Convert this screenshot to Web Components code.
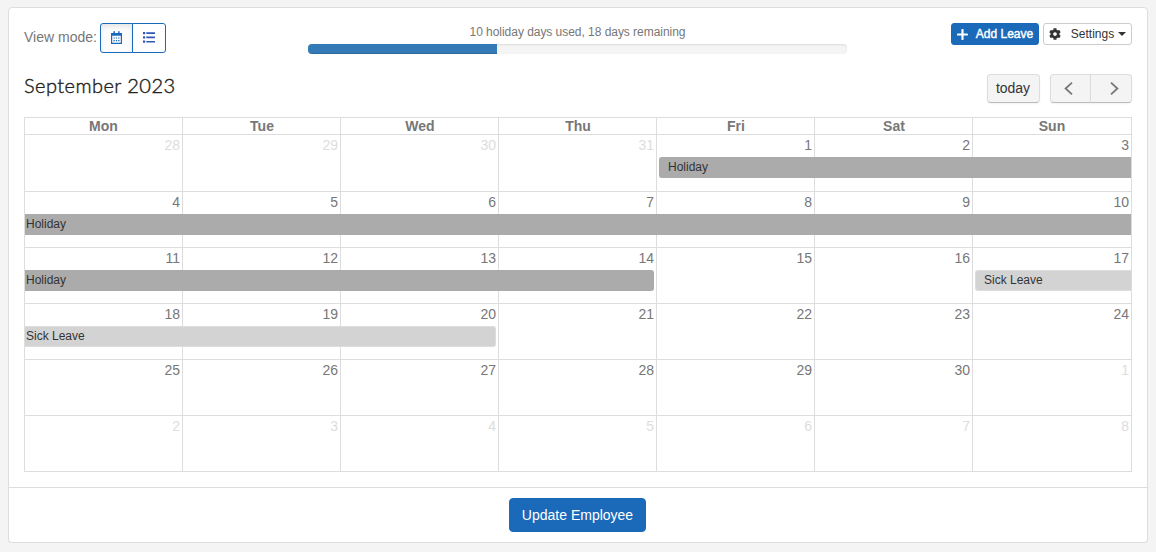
<!DOCTYPE html>
<html lang="en">
<head>
<meta charset="utf-8">
<title>Employee Leave</title>
<style>
    body {
        margin: 0;
        padding: 7px 8px 0;
        background-color: #f4f4f4;
        font-family: "Liberation Sans", Arial, sans-serif;
        font-size: 14px;
        line-height: 20px;
        color: #777;
    }
    .update {
        width: 137px;
        margin-right: 1px;
    }
</style>
</head>
<body>
<leave-panel>
    <leave-toolbar></leave-toolbar>
    <leave-calendar></leave-calendar>
    <app-button class="update" slot="footer" kind="primary">Update Employee</app-button>
</leave-panel>

<script>
const ICONS = {
    calendar: `<svg width="11" height="13" viewBox="0 0 11 13"><path fill="none" stroke="currentColor" stroke-width="1.2" d="M.6 2.7h9.8v9.600H.6z"/><path fill="currentColor" d="M0 2h11v2.800H0zM2.400.2h1.500V3H2.400zM7.100.2h1.500V3H7.100zM2.500 6.400h1.300v1.200H2.500zM4.850 6.400h1.300v1.200h-1.300zM7.200 6.400h1.300v1.200H7.200zM2.500 9h1.300v1.200H2.500zM4.850 9h1.300v1.200h-1.300zM7.200 9h1.300v1.200H7.200z"/></svg>`,
    list: `<svg width="12" height="11" viewBox="0 0 12 11"><path fill="currentColor" d="M0 0h2.200v2.200H0zM3.300.3H12v1.600H3.300zM0 4.300h2.200v2.200H0zM3.300 4.600H12v1.600H3.300zM0 8.600h2.200v2.200H0zM3.300 8.900H12v1.600H3.300z"/></svg>`,
    plus: `<svg width="11" height="11" viewBox="0 0 11 11"><path stroke="currentColor" stroke-width="2.2" stroke-linecap="round" d="M5.5 1v9M1 5.5h9"/></svg>`,
    cog: `<svg width="12" height="12" viewBox="0 0 512 512"><path fill="currentColor" d="M487.4 315.700l-42.600-24.600c4.300-23.200 4.300-47 0-70.200l42.600-24.600c4.900-2.800 7.100-8.600 5.500-14-11.100-35.600-30-67.800-54.700-94.600-3.800-4.100-10-5.100-14.800-2.300L380.800 110c-17.900-15.400-38.500-27.300-60.800-35.100V25.800c0-5.600-3.900-10.500-9.400-11.700-36.700-8.200-74.300-7.800-109.200 0-5.500 1.200-9.400 6.100-9.400 11.700V75c-22.200 7.900-42.800 19.800-60.800 35.100L88.700 85.500c-4.900-2.800-11-1.900-14.800 2.300-24.700 26.700-43.600 58.900-54.700 94.600-1.700 5.400.6 11.200 5.500 14L67.300 221c-4.300 23.200-4.300 47 0 70.200l-42.600 24.600c-4.900 2.800-7.100 8.600-5.500 14 11.100 35.600 30 67.800 54.700 94.600 3.800 4.100 10 5.100 14.800 2.300l42.600-24.600c17.900 15.400 38.500 27.300 60.800 35.100v49.200c0 5.600 3.900 10.500 9.400 11.700 36.700 8.200 74.300 7.800 109.200 0 5.500-1.200 9.400-6.100 9.400-11.700v-49.200c22.200-7.900 42.800-19.800 60.800-35.100l42.600 24.600c4.900 2.800 11 1.900 14.800-2.300 24.700-26.700 43.600-58.900 54.700-94.600 1.500-5.500-.7-11.300-5.600-14.100zM256 336c-44.100 0-80-35.900-80-80s35.900-80 80-80 80 35.900 80 80-35.900 80-80 80z"/></svg>`,
    caret: `<svg width="8" height="4" viewBox="0 0 8 4"><path fill="currentColor" d="M0 0h8L4 4z"/></svg>`,
    left: `<svg width="9" height="13" viewBox="0 0 9 13"><path fill="none" stroke="currentColor" stroke-width="1.8" d="M8 .7 1.600 6.500 8 12.300"/></svg>`,
    right: `<svg width="9" height="13" viewBox="0 0 9 13"><path fill="none" stroke="currentColor" stroke-width="1.8" d="M1 .7 7.400 6.500 1 12.300"/></svg>`
};

class AppIcon extends HTMLElement {
    constructor() {
        super();
        this.attachShadow({mode: 'open'});
    }

    connectedCallback() {
        this.shadowRoot.innerHTML = `
        <style>
            :host {
                display: inline-flex;
            }
        </style>
        ${ICONS[this.getAttribute('name')]}`;
    }
}
customElements.define('app-icon', AppIcon);

class AppButton extends HTMLElement {
    constructor() {
        super();
        this.attachShadow({mode: 'open'});
    }

    connectedCallback() {
        this.shadowRoot.innerHTML = `
        <style>
            :host {
                display: inline-block;
            }
            button {
                display: flex;
                align-items: center;
                justify-content: center;
                box-sizing: border-box;
                width: 100%;
                height: 34px;
                margin: 0;
                padding: 0 12px;
                border: 1px solid #ccc;
                border-radius: 4px;
                background: #fff;
                color: #333;
                font: inherit;
                white-space: nowrap;
            }
            :host([kind="primary"]) button {
                background: #1b69b9;
                border-color: #1b69b9;
                color: #fff;
            }
            :host([size="xs"]) button {
                height: 22px;
                padding: 0 5px;
                border-radius: 3px;
                font-size: 12px;
                line-height: 18px;
            }
        </style>
        <button type="button"><slot></slot></button>`;
    }
}
customElements.define('app-button', AppButton);

class LeavePanel extends HTMLElement {
    constructor() {
        super();
        this.attachShadow({mode: 'open'});
    }

    connectedCallback() {
        this.shadowRoot.innerHTML = `
        <style>
            :host {
                display: block;
                box-sizing: border-box;
                height: 536px;
                border: 1px solid #ddd;
                border-radius: 4px;
                background: #fff;
                box-shadow: 0 1px 1px rgba(0, 0, 0, 0.05);
            }
            .body {
                padding: 15px;
            }
            footer {
                display: flex;
                justify-content: center;
                padding: 10px 15px;
                border-top: 1px solid #ddd;
            }
        </style>
        <div class="body"><slot></slot></div>
        <footer><slot name="footer"></slot></footer>`;
    }
}
customElements.define('leave-panel', LeavePanel);

class LeaveToolbar extends HTMLElement {
    constructor() {
        super();
        this.attachShadow({mode: 'open'});
    }

    connectedCallback() {
        this.shadowRoot.innerHTML = `
        <style>
            :host {
                display: grid;
                grid-template-columns: 284px 539px 285px;
                height: 51px;
                align-items: start;
            }
            .modes {
                display: flex;
                align-items: center;
                gap: 3px;
            }
            .modes span {
                width: 73px;
                padding-bottom: 2px;
            }
            .group {
                display: flex;
            }
            .group button {
                display: flex;
                align-items: center;
                justify-content: center;
                box-sizing: border-box;
                width: 33px;
                height: 30px;
                padding: 0 0 1px;
                border: 1px solid #1b69b9;
                background: #fff;
                color: #1b69b9;
            }
            .group button:first-child {
                border-radius: 3px 0 0 3px;
                background: #fcfcfc;
                box-shadow: inset 0 3px 5px rgba(0, 0, 0, 0.09);
            }
            .group button:last-child {
                width: 34px;
                margin-left: -1px;
                border-radius: 0 3px 3px 0;
                color: #3158b5;
            }
            .usage {
                padding-top: 1px;
                font-size: 12px;
                line-height: 17px;
                text-align: center;
                letter-spacing: -0.04px;
            }
            .track {
                height: 10px;
                margin-top: 3px;
                border-radius: 4px;
                overflow: hidden;
                background: #f4f4f4;
                box-shadow: inset 0 1px 2px rgba(0, 0, 0, 0.1);
            }
            .bar {
                width: 189px;
                height: 100%;
                background: #337ab7;
                box-shadow: inset 0 -1px 0 rgba(0, 0, 0, 0.15);
            }
            .actions {
                display: flex;
                justify-content: flex-end;
                gap: 4px;
            }
            .add {
                width: 88px;
                -webkit-text-stroke: 0.4px #fff;
            }
            .settings {
                width: 89px;
            }
            .add app-icon {
                margin-right: 8px;
            }
            .settings app-icon:first-child {
                margin-right: 10px;
            }
            .settings app-icon:last-child {
                margin-left: 4px;
            }
        </style>
        <div class="modes">
            <span>View mode:</span>
            <div class="group">
                <button type="button" aria-label="Calendar"><app-icon name="calendar"></app-icon></button>
                <button type="button" aria-label="List"><app-icon name="list"></app-icon></button>
            </div>
        </div>
        <div class="usage">
            <div>10 holiday days used, 18 days remaining</div>
            <div class="track"><div class="bar"></div></div>
        </div>
        <div class="actions">
            <app-button class="add" kind="primary" size="xs"><app-icon name="plus"></app-icon>Add Leave</app-button>
            <app-button class="settings" size="xs"><app-icon name="cog"></app-icon>Settings<app-icon name="caret"></app-icon></app-button>
        </div>`;
    }
}
customElements.define('leave-toolbar', LeaveToolbar);

class LeaveEvent extends HTMLElement {
    constructor() {
        super();
        this.attachShadow({mode: 'open'});
    }

    connectedCallback() {
        this.shadowRoot.innerHTML = `
        <style>
            :host {
                display: block;
                box-sizing: border-box;
                height: 21px;
                padding: 0 1px;
                border: 1px solid #ababab;
                border-width: 1px 0;
                background: #ababab;
                color: #333;
                font-size: 12px;
                line-height: 18px;
            }
            :host([type="sick"]) {
                background: #d3d3d3;
                border-color: #ddd;
            }
            :host([start]) {
                margin-left: 2px;
                padding-left: 8px;
                border-left-width: 1px;
                border-radius: 3px 0 0 3px;
            }
            :host([end]) {
                margin-right: 3px;
                border-right-width: 1px;
                border-radius: 0 3px 3px 0;
            }
        </style>
        <slot></slot>`;
    }
}
customElements.define('leave-event', LeaveEvent);

class LeaveCalendar extends HTMLElement {
    constructor() {
        super();
        this.attachShadow({mode: 'open'});
        this.weekdays = ['Mon', 'Tue', 'Wed', 'Thu', 'Fri', 'Sat', 'Sun'];
        this.events = [
            {week: 0, from: 5, to: 7, title: 'Holiday', flags: 'start'},
            {week: 1, from: 1, to: 7, title: 'Holiday', flags: ''},
            {week: 2, from: 1, to: 4, title: 'Holiday', flags: 'end'},
            {week: 2, from: 7, to: 7, title: 'Sick Leave', flags: 'type="sick" start'},
            {week: 3, from: 1, to: 3, title: 'Sick Leave', flags: 'type="sick" end'}
        ];
    }

    connectedCallback() {
        this.render();
    }

    renderWeek(week) {
        let html = '';
        for (let col = 0; col < 7; col++) {
            const date = new Date(2023, 7, 28 + week * 7 + col);
            const other = date.getMonth() !== 8 ? 'other' : '';
            html += `<div class="day ${other}" style="grid-column: ${col + 1}">${date.getDate()}</div>`;
        }
        this.events.filter(e => e.week === week).forEach(e => {
            html += `<leave-event ${e.flags} style="grid-column: ${e.from} / ${e.to + 1}">${e.title}</leave-event>`;
        });
        return `<div class="row week">${html}</div>`;
    }

    render() {
        this.shadowRoot.innerHTML = `
        <style>
            :host {
                display: block;
            }
            header {
                display: flex;
                align-items: flex-start;
                height: 43px;
            }
            h2 {
                flex: 1;
                margin: 0;
                color: #222;
                font: 300 20px/22px Lato, sans-serif;
                letter-spacing: 0.45px;
                -webkit-text-stroke: 0.4px #222;
            }
            .nav {
                display: flex;
            }
            .nav button {
                display: flex;
                align-items: center;
                justify-content: center;
                box-sizing: border-box;
                width: 41px;
                height: 29px;
                padding: 0;
                border: 1px solid #ddd;
                border-bottom-color: #bbb;
                background: #f4f4f4;
                box-shadow: 0 1px 2px rgba(0, 0, 0, 0.05);
                color: #777;
                font: inherit;
            }
            .nav .today {
                width: 53px;
                margin-right: 10px;
                padding: 0 1px 2px 0;
                border-radius: 4px;
                color: #333;
            }
            .nav .prev {
                border-radius: 4px 0 0 4px;
            }
            .nav .next {
                width: 42px;
                margin-left: -1px;
                border-radius: 0 4px 4px 0;
            }
            .prev app-icon {
                margin-right: 5px;
            }
            .next app-icon {
                margin-left: 6px;
            }
            .grid {
                border: 1px solid #ddd;
            }
            .row {
                display: grid;
                grid-template-columns: repeat(6, 158px) 1fr;
            }
            .weekdays {
                height: 16px;
                line-height: 16px;
                font-weight: bold;
                text-align: center;
            }
            .weekdays div:first-child {
                padding-right: 1px;
            }
            .weekdays div + div,
            .day + .day {
                border-left: 1px solid #ddd;
                margin-left: -1px;
            }
            .week {
                box-sizing: border-box;
                height: 56px;
                grid-template-rows: 22px 21px 1fr;
                border-top: 1px solid #ddd;
            }
            .weekdays + .week {
                height: 57px;
            }
            .day {
                grid-row: 1 / 4;
                padding-right: 3px;
                text-align: right;
            }
            .day:nth-child(7) {
                padding-right: 2px;
            }
            .other {
                color: #ddd;
            }
            leave-event {
                grid-row: 2;
                z-index: 1;
            }
        </style>
        <header>
            <h2>September 2023</h2>
            <div class="nav">
                <button type="button" class="today">today</button>
                <button type="button" class="prev" aria-label="Previous"><app-icon name="left"></app-icon></button>
                <button type="button" class="next" aria-label="Next"><app-icon name="right"></app-icon></button>
            </div>
        </header>
        <div class="grid">
            <div class="row weekdays">${this.weekdays.map(d => `<div>${d}</div>`).join('')}</div>
            ${[0, 1, 2, 3, 4, 5].map(w => this.renderWeek(w)).join('')}
        </div>`;
    }
}
customElements.define('leave-calendar', LeaveCalendar);
</script>
</body>
</html>
